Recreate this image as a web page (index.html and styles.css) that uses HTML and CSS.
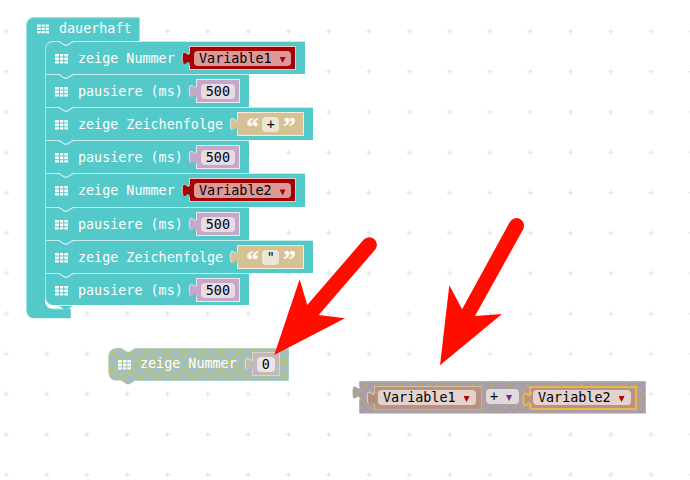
FILE: index.html
```html
<!DOCTYPE html>
<html lang="de">
<head>
<meta charset="utf-8">
<title>Blöcke</title>
<link rel="stylesheet" href="styles.css">
</head>
<body>
<svg class="defs" width="0" height="0" aria-hidden="true">
  <defs>
    <pattern id="grid" width="40.3" height="40.3" patternUnits="userSpaceOnUse" x="-13.9" y="11.1">
      <path d="M17.6 20.3h5.4M20.3 17.6v5.4" stroke="#e0e0e0" stroke-width="1"/>
    </pattern>
    <pattern id="hatch" width="9" height="9" patternUnits="userSpaceOnUse">
      <path d="M0 0l9 9M9 0l-9 9" stroke="#b9c45c" stroke-width=".9" fill="none"/>
    </pattern>
    <symbol id="icon" viewBox="0 0 13 10">
      <path d="M0 0h4v2.6H0zM5 0h3.3v2.6H5zM9.3 0H13v2.6H9.3zM0 3.6h4v2.6H0zM5 3.6h3.3v2.6H5zM9.3 3.6H13v2.6H9.3zM0 7.2h4v2.3H0zM5 7.2h3.3v2.3H5zM9.3 7.2H13v2.3H9.3z" fill="#fff"/>
    </symbol>
    <symbol id="notch" viewBox="0 0 16 6">
      <path d="M0 0v.7h1.2l5.4 3.6h2.7l5.4-3.6H16V0z" fill="#54c9c9"/>
      <path d="M0 .6h1.2l5.4 3.6h2.7L14.7.6H16" fill="none" stroke="#d4f2f2" stroke-width="1.2"/>
    </symbol>
    <symbol id="tab" viewBox="0 0 10 15">
      <path d="M10 .5H8.5C8.5 9.5 1.3-6.7 1.3 7.2S8.5 5 8.5 14H10z" fill="currentColor"/>
      <path d="M8.5 .5C8.5 9.5 1.3-6.7 1.3 7.2c0 3.4.4 4.6 1.5 5" fill="none" stroke="#fff" stroke-opacity=".65" stroke-width="1"/>
    </symbol>
  </defs>
</svg>

<main class="workspace">
  <svg class="grid" width="690" height="480"><rect width="690" height="480" fill="url(#grid)"/></svg>

  <section class="loop">
    <svg class="shape" width="116" height="303">
      <path d="M.6 7.7A7.2 7.2 0 0 1 7.8.5H113.5V24.500H27a8 8 0 0 0-8 8V283.500a8 8 0 0 0 8 8.500H44.800V301.300H7.800A7.200 7.200 0 0 1 .6 294.100z" fill="#54c9c9"/>
      <path d="M.6 294V7.700A7.200 7.200 0 0 1 7.800.6H113.500" fill="none" stroke="#98dfdf" stroke-width="1.1"/>
      <path d="M20.900 289.800a8 8 0 0 0 6 2.200H44.800" fill="none" stroke="#98dfdf"/>
    </svg>
    <header class="head"><svg class="icon"><use href="#icon"/></svg><span>dauerhaft</span></header>
    <div class="stack">
      <div class="row"><svg class="notch"><use href="#notch"/></svg><svg class="icon"><use href="#icon"/></svg><span>zeige Nummer</span>
        <div class="value var"><svg class="tab"><use href="#tab"/></svg><div class="field">Variable1<i class="caret"></i></div></div></div>
      <div class="row"><svg class="notch"><use href="#notch"/></svg><svg class="icon"><use href="#icon"/></svg><span>pausiere (ms)</span>
        <div class="value num"><svg class="tab"><use href="#tab"/></svg><div class="field">500</div></div></div>
      <div class="row"><svg class="notch"><use href="#notch"/></svg><svg class="icon"><use href="#icon"/></svg><span>zeige Zeichenfolge</span>
        <div class="value str"><svg class="tab"><use href="#tab"/></svg><b class="quote">“</b><div class="field">+</div><b class="quote">”</b></div></div>
      <div class="row"><svg class="notch"><use href="#notch"/></svg><svg class="icon"><use href="#icon"/></svg><span>pausiere (ms)</span>
        <div class="value num"><svg class="tab"><use href="#tab"/></svg><div class="field">500</div></div></div>
      <div class="row"><svg class="notch"><use href="#notch"/></svg><svg class="icon"><use href="#icon"/></svg><span>zeige Nummer</span>
        <div class="value var"><svg class="tab"><use href="#tab"/></svg><div class="field">Variable2<i class="caret"></i></div></div></div>
      <div class="row"><svg class="notch"><use href="#notch"/></svg><svg class="icon"><use href="#icon"/></svg><span>pausiere (ms)</span>
        <div class="value num"><svg class="tab"><use href="#tab"/></svg><div class="field">500</div></div></div>
      <div class="row"><svg class="notch"><use href="#notch"/></svg><svg class="icon"><use href="#icon"/></svg><span>zeige Zeichenfolge</span>
        <div class="value str"><svg class="tab"><use href="#tab"/></svg><b class="quote">“</b><div class="field">"</div><b class="quote">”</b></div></div>
      <div class="row"><svg class="notch"><use href="#notch"/></svg><svg class="icon"><use href="#icon"/></svg><span>pausiere (ms)</span>
        <div class="value num"><svg class="tab"><use href="#tab"/></svg><div class="field">500</div></div></div>
    </div>
    <svg class="foot" width="16" height="5"><path d="M0 0h14.700l-5.400 3.600H6.600L1.200 0z" fill="#54c9c9"/></svg>
  </section>

  <section class="loose">
    <svg class="shape" width="182" height="38">
      <path d="M.8 7.800A7.200 7.200 0 0 1 8 .6h5.500l5.400 3.600h2.700L27 .6H180.600V32.600H27l-5.400 3.600h-2.700l-5.400-3.600H8A7.200 7.200 0 0 1 .8 25.400z" fill="#a4bfbc"/>
      <path d="M.8 7.800A7.200 7.200 0 0 1 8 .6h5.500l5.400 3.600h2.700L27 .6H180.600V32.600H27l-5.400 3.600h-2.700l-5.400-3.600H8A7.200 7.200 0 0 1 .8 25.400z" fill="url(#hatch)"/>
      <path d="M.8 25.400V7.800A7.200 7.200 0 0 1 8 .6h5.500l5.400 3.600h2.700L27 .6H180" fill="none" stroke="#bdc6b0"/>
      <path d="M180.300.6v31.800H27" fill="none" stroke="#a2cbcb"/>
    </svg>
    <svg class="icon"><use href="#icon"/></svg><span>zeige Nummer</span>
    <div class="value zero"><svg class="tab"><use href="#tab"/></svg><div class="field">0</div></div>
  </section>

  <section class="math">
    <svg class="shape" width="295" height="34">
      <path d="M7.600.3H293.800V32.500H7.600V18.300C7.600 9.300.6 25.500 .6 11.500S7.600 13.800 7.600 4.800z" fill="#aa9ba9"/>
      <path d="M7.600.3H293.800V32.500H7.600V18.300C7.600 9.300.6 25.500 .6 11.500S7.600 13.800 7.600 4.800z" fill="url(#hatch)" opacity=".5"/>
      <path d="M7.600 32V19M7.600 5V.5H293.500" fill="none" stroke="#bcb0b0"/>
    </svg>
    <div class="value dim"><svg class="tab"><use href="#tab"/></svg><div class="field">Variable1<i class="caret"></i></div></div>
    <div class="field op">+<i class="caret"></i></div>
    <div class="value dim selected"><svg class="tab" viewBox="0 0 10 15"><path d="M10 .5H8.500C8.500 9.500 1.300-6.700 1.300 7.200S8.500 5 8.500 14H10" fill="#ba967f" stroke="#eab451" stroke-width="2"/></svg><div class="field">Variable2<i class="caret"></i></div></div>
  </section>

  <svg class="arrows" width="690" height="480" fill="#ff0e00">
    <path d="M274.200 355 299.700 279.300 307.200 305 363.800 239.600A7.600 7.600 0 0 1 375.300 249.500L318.700 315 345 318.300z"/>
    <path d="M440 365.200 449.300 285.300 462.100 309.300 509.700 222.200A7.600 7.600 0 0 1 523.200 229.300L475 316 502 314z"/>
  </svg>
</main>
</body>
</html>
```

FILE: styles.css
```css
body {
  margin: 0;
  background: #fff;
}

.defs {
  position: absolute;
}

.workspace {
  position: relative;
  width: 690px;
  height: 480px;
  overflow: hidden;
  font: 13.4px/16px "DejaVu Sans Mono", monospace;
  color: #fff;
  white-space: nowrap;
}

.grid,
.arrows {
  position: absolute;
  left: 0;
  top: 0;
}

.shape {
  position: absolute;
  left: 0;
  top: 0;
}

.icon {
  width: 13px;
  height: 10px;
  margin-right: 10px;
  flex: none;
}

.loop {
  position: absolute;
  left: 26px;
  top: 17px;
}

.head {
  position: relative;
  display: flex;
  align-items: center;
  height: 24px;
  padding-left: 11px;
}

.head .icon {
  width: 12px;
}

.stack {
  position: relative;
  display: flex;
  flex-direction: column;
  align-items: flex-start;
  margin-left: 19px;
}

.row {
  position: relative;
  display: flex;
  align-items: flex-start;
  box-sizing: border-box;
  height: 33.12px;
  padding: 9px 9px 0;
  border-top: 1px solid #c5eded;
  border-left: 1px solid #a5e3e3;
  background: #54c9c9;
}

.row:first-child {
  border-top-left-radius: 8px;
}

.row:last-child {
  height: 32.700px;
  border-bottom-left-radius: 8px;
}

.row > .icon {
  margin-top: 3px;
}

.notch {
  position: absolute;
  left: 12px;
  top: -1px;
  width: 16px;
  height: 6px;
}

.foot {
  position: absolute;
  left: 32px;
  top: 288.500px;
}

.value {
  position: relative;
  display: flex;
  flex: none;
  box-sizing: border-box;
  height: 24px;
  margin-top: -5px;
  padding: 4px;
  border: 1px solid #eee;
}

.tab {
  position: absolute;
  left: -9px;
  top: 4px;
  width: 10px;
  height: 15px;
}

.field {
  box-sizing: border-box;
  height: 15px;
  padding: 0 5px;
  border-radius: 4px;
  color: #000;
  line-height: 15px;
}

.var {
  width: 107px;
  margin-left: 14.3px;
  background: #a80000;
  border-color: #f0c8c8;
  color: #a80000;
}

.var .field {
  width: 97px;
  background: #dc9999;
}

.num {
  width: 44px;
  margin-left: 13px;
  background: #c5a7c8;
  border-color: #efe6f0;
  color: #c5a7c8;
}

.num .field {
  width: 34px;
  padding: 0 5px;
  background: #e7dbe8;
}

.str {
  width: 67px;
  margin-left: 14px;
  padding-left: 8px;
  background: #d6c195;
  border-color: #f4ecdc;
  color: #d6c195;
}

.str .field {
  width: 17px;
  padding: 0 4.5px;
  margin: 0 4px;
  background: #eee6d5;
}

.quote {
  width: 12px;
  height: 15px;
  font: bold 25px/19px "Liberation Serif", serif;
  color: #fbf8f1;
  -webkit-text-stroke: 0.4px #fbf8f1;
}

.caret {
  display: inline-block;
  width: 6px;
  height: 6px;
  margin-left: 8px;
  background: #b30000;
  clip-path: polygon(0 0, 100% 0, 50% 100%);
}

.loose {
  position: absolute;
  left: 108px;
  top: 348px;
  display: flex;
  padding: 8px 9px 0 10px;
}

.loose > .icon,
.loose > span,
.loose > .value {
  position: relative;
}

.loose > .icon {
  margin-top: 4px;
  margin-right: 9px;
}

.zero {
  width: 28px;
  margin-left: 15px;
  margin-top: -4px;
  background: #c4b9b6;
  border-color: #dcd2ce;
  color: #c0b9b5;
}

.zero .field {
  width: 18px;
  padding: 0 5px;
  background: #ebe6e5;
}

.math {
  position: absolute;
  left: 352px;
  top: 381px;
  display: flex;
  align-items: flex-start;
  padding: 9px 9px 0 22px;
}

.dim {
  width: 108px;
  margin: -4px 0 0;
  padding: 3px;
  background: #ba9284;
  border-color: #d9a49b;
  border-top-color: #d8c094;
  border-left-color: #d8c094;
  color: #b58c7c;
}

.dim .field {
  width: 98px;
  padding: 0 5px;
  background: #e3d3cc;
}

.op {
  position: relative;
  width: 33px;
  margin: -1px 10px 0 4px;
  padding: 0 4px;
  background: #e0d9df;
}

.op .caret {
  background: #7a2a86;
}

.selected {
  padding: 2px;
  border: 2px solid #eab451;
}
```
